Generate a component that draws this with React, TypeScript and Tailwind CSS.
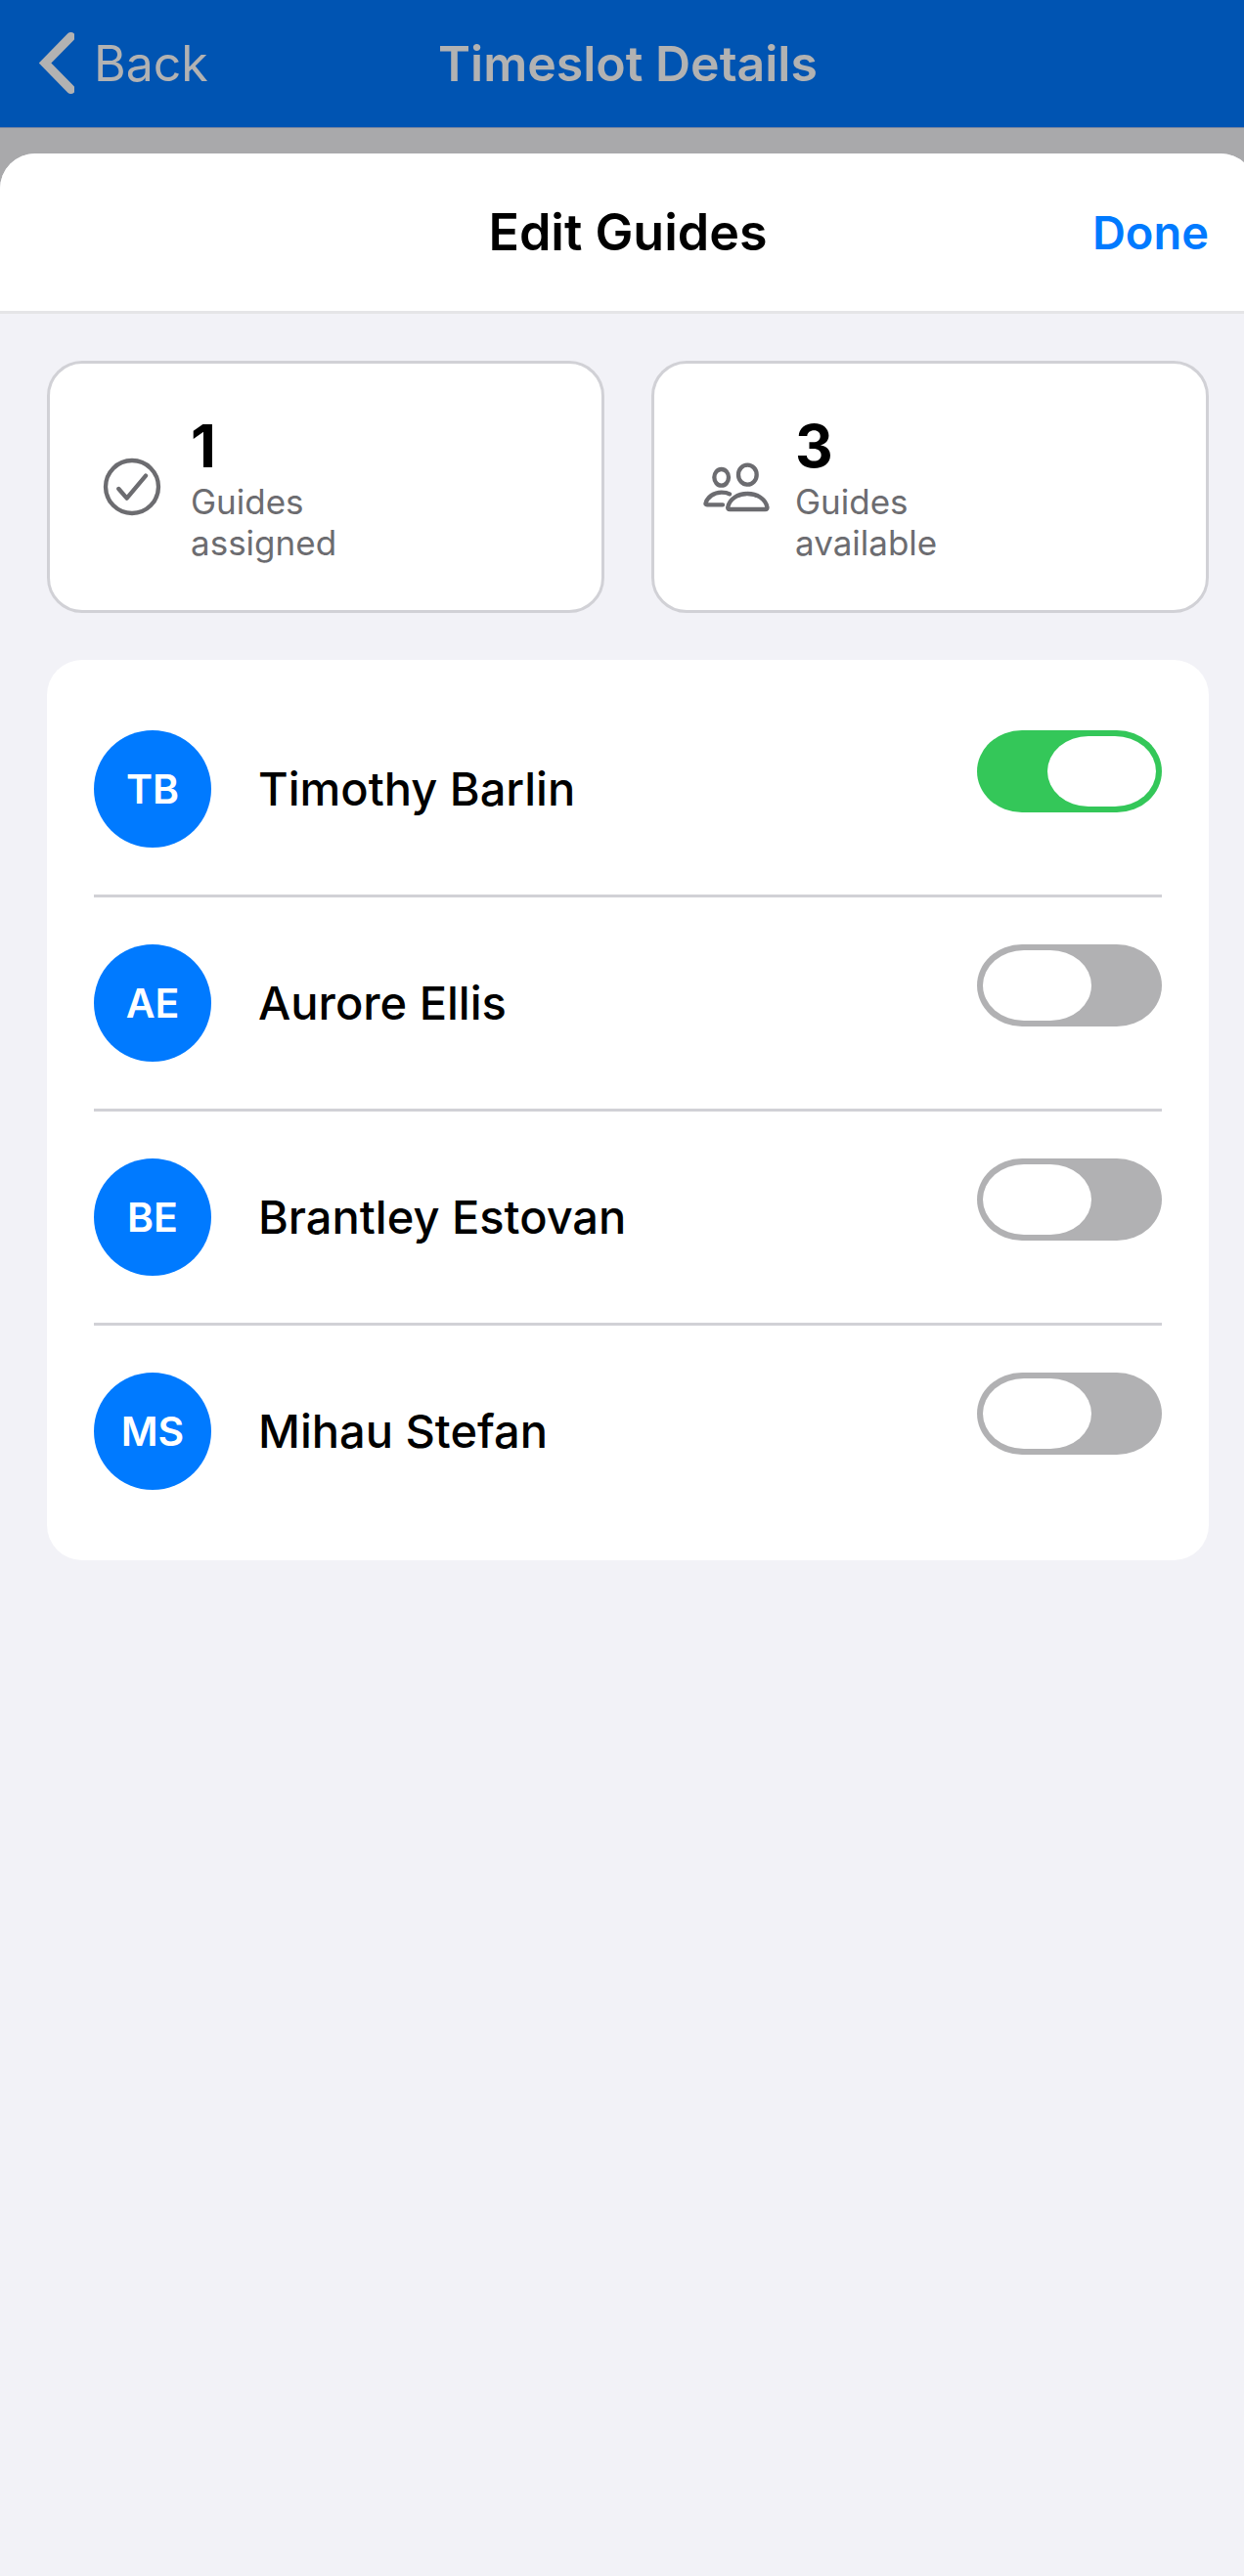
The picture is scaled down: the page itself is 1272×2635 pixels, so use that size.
import { useState } from 'react'

type Guide = { id: string; name: string; initials: string; assigned: boolean }

const initialGuides: Guide[] = [
  { id: 'timothy', name: 'Timothy Barlin', initials: 'TB', assigned: true },
  { id: 'aurore', name: 'Aurore Ellis', initials: 'AE', assigned: false },
  { id: 'brantley', name: 'Brantley Estovan', initials: 'BE', assigned: false },
  { id: 'mihau', name: 'Mihau Stefan', initials: 'MS', assigned: false },
]

function ChevronIcon() {
  return (
    <svg viewBox="0 0 36 64" className="h-16 w-9 overflow-hidden" fill="none" stroke="currentColor" strokeWidth="9" strokeLinecap="round" aria-hidden="true">
      <path d="M32.5 4.5 L6 31.5 L32.5 58.5" />
    </svg>
  )
}

function CheckCircleIcon() {
  return (
    <svg viewBox="0 0 216 216" className="size-18 shrink-0" fill="none" stroke="currentColor" strokeWidth="13" strokeLinecap="round" strokeLinejoin="round" aria-hidden="true">
      <circle cx="108" cy="108" r="81" />
      <path d="M67 114 L92 143 L150 74" />
    </svg>
  )
}

function PeopleIcon() {
  return (
    <svg viewBox="0 0 216 216" className="size-18 shrink-0" fill="none" stroke="currentColor" strokeWidth="13" strokeLinecap="round" strokeLinejoin="round" aria-hidden="true">
      <ellipse cx="62" cy="79" rx="22" ry="25" />
      <ellipse cx="142" cy="71" rx="28" ry="30" />
      <path d="M87 130 C80 126 72 125 62 125 C38 125 19 140 14 157 Q12 163 18 163 H66" />
      <path d="M88 177 H196 Q204 177 202 169 C197 146 172 129 142 129 C112 129 87 146 82 169 Q80 177 88 177 Z" />
    </svg>
  )
}

function StatCard({ icon, count, label }: { icon: React.ReactNode; count: number; label: string }) {
  return (
    <div className="flex items-center gap-6 rounded-[36px] border-3 border-[#d1d1d6] bg-white p-12 text-[#6c6c70]">
      {icon}
      <div>
        <p className="text-[60px] leading-[72px] font-bold text-black">{count}</p>
        <p className="text-[35px] leading-[42px]">Guides<br />{label}</p>
      </div>
    </div>
  )
}

export default function App() {
  const [guides, setGuides] = useState(initialGuides)
  const assigned = guides.filter((g) => g.assigned).length

  function toggle(id: string) {
    setGuides((prev) => prev.map((g) => (g.id === id ? { ...g, assigned: !g.assigned } : g)))
  }

  return (
    <div className="overflow-x-hidden font-['Inter',sans-serif]">
      <div className="-mr-3 flex min-h-screen flex-col bg-[#a9a9ab]">
        <header className="mb-[26px] grid h-[131px] grid-cols-[1fr_auto_1fr] items-center border-b border-[#7484a0] bg-[#0054b2] px-10 text-[#b2b2b2]">
          <button className="flex items-center gap-5 justify-self-start text-[50px] leading-[60px]">
            <ChevronIcon />
            Back
          </button>
          <h1 className="text-[50px] leading-[60px] font-semibold">Timeslot Details</h1>
        </header>

        <main className="flex-1 overflow-hidden rounded-t-[36px] bg-[#f2f2f7]">
          <div className="grid h-[164px] grid-cols-[1fr_auto_1fr] items-center border-b-3 border-[#e5e5e7] bg-white px-12">
            <h2 className="col-start-2 text-[52px] leading-[60px] font-semibold">Edit Guides</h2>
            <button className="justify-self-end text-[47px] leading-[60px] font-semibold text-[#007aff]">Done</button>
          </div>

          <div className="flex flex-col gap-12 p-12">
            <section className="grid grid-cols-2 gap-12">
              <StatCard icon={<CheckCircleIcon />} count={assigned} label="assigned" />
              <StatCard icon={<PeopleIcon />} count={guides.length - assigned} label="available" />
            </section>

            <ul className="divide-y-3 divide-[#d1d1d6] rounded-[36px] bg-white px-12 py-6">
              {guides.map((g) => (
                <li key={g.id} className="flex items-start py-12">
                  <label htmlFor={g.id} className="flex flex-1 items-center gap-12 text-[47px] leading-[60px] font-medium">
                    <span className="flex size-30 items-center justify-center rounded-full bg-[#007aff] text-[41px] font-semibold text-white">
                      {g.initials}
                    </span>
                    {g.name}
                  </label>
                  <input
                    id={g.id}
                    type="checkbox"
                    role="switch"
                    checked={g.assigned}
                    onChange={() => toggle(g.id)}
                    className="h-[84px] w-[189px] shrink-0 appearance-none rounded-[46px/42px] bg-[#b1b1b3] p-1.5 before:block before:h-[72px] before:w-[111px] before:rounded-[42px/36px] before:bg-white checked:bg-[#34c759] checked:before:ml-auto"
                  />
                </li>
              ))}
            </ul>
          </div>
        </main>
      </div>
    </div>
  )
}
